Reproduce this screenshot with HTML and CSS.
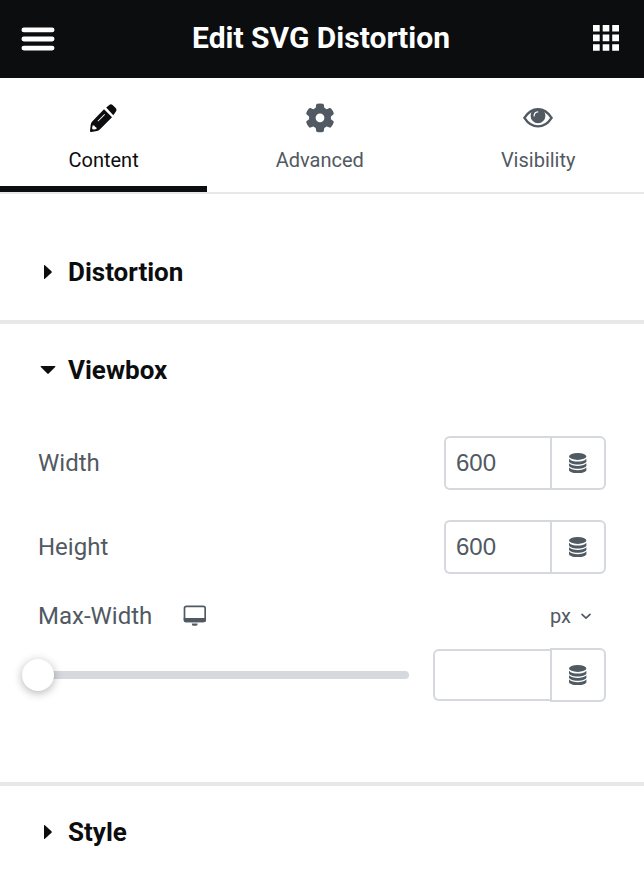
FILE: index.html
```html
<!DOCTYPE html>
<html lang="en">
<head>
<meta charset="utf-8">
<meta name="viewport" content="width=device-width, initial-scale=1">
<title>Edit SVG Distortion</title>
<link rel="stylesheet" href="styles.css">
</head>
<body>
<svg class="sprite" aria-hidden="true">
  <symbol id="database" viewBox="0 0 18 22">
    <ellipse cx="8.700" cy="4.400" rx="8.700" ry="3.500"/>
    <path d="M0 6.700C2 8.900 5.200 9.600 8.700 9.600s6.700-.7 8.700-2.900V9.200C17.400 11 13.500 12.400 8.700 12.400S0 11 0 9.200z"/>
    <path d="M0 11.300C2 13.300 5.200 13.900 8.700 13.900s6.700-.6 8.700-2.600V13.500C17.400 15.300 13.500 16.700 8.700 16.700S0 15.300 0 13.500z"/>
    <path d="M0 15.600C2 17.600 5.200 18.200 8.700 18.200s6.700-.6 8.700-2.600V17.900C17.400 19.700 13.500 21.100 8.700 21.100S0 19.700 0 17.900z"/>
  </symbol>
</svg>

<header class="topbar">
  <button class="topbar-button" type="button" aria-label="Menu">
    <svg width="34" height="26" viewBox="0 0 34 26" fill="#fff">
      <rect x="0.500" y="2.500" width="33" height="4.800" rx="2.400"/>
      <rect x="0.500" y="11.600" width="33" height="4.800" rx="2.400"/>
      <rect x="0.500" y="20.700" width="33" height="4.800" rx="2.400"/>
    </svg>
  </button>
  <h1 class="topbar-title">Edit SVG Distortion</h1>
  <button class="topbar-button" type="button" aria-label="Widgets">
    <svg width="28" height="26" viewBox="0 0 28 26" fill="#fff">
      <path d="M0 0h6.700v6.500H0zM9.700 0h6.600v6.500H9.700zM19.200 0h6.800v6.500h-6.800zM0 9.500h6.700v6.700H0zM9.700 9.500h6.600v6.700H9.700zM19.200 9.500h6.800v6.700h-6.800zM0 19.300h6.700v6.500H0zM9.700 19.300h6.600v6.500H9.700zM19.200 19.300h6.800v6.500h-6.800z"/>
    </svg>
  </button>
</header>

<nav class="tabs" role="tablist">
  <button class="tab tab-active" type="button" role="tab" aria-selected="true">
    <svg width="30" height="30" viewBox="0 0 30 30" fill="currentColor">
      <path fill-rule="evenodd" d="M15 6.300 23 14.200 10.800 26.400Q9.600 27.600 8 27.900L2.200 29Q.9 29.200 1 27.900L1.700 21.800Q1.900 19.800 3.200 18.400zM3.600 22.600 3.100 25.200Q3.300 26.800 5 26.600L7.600 26 7.400 24.400Q5.700 24.200 5.300 22.600zM8.500 17.900 9.200 18.500 16 11.700 15.400 11z"/>
      <path d="M17.200 4.600 20.300 1.900Q22 .5 23.600 2L26.900 5.300Q28.300 7 26.900 8.600L24.300 12.300z"/>
    </svg>
    <span>Content</span>
  </button>
  <button class="tab" type="button" role="tab" aria-selected="false">
    <svg width="30" height="30" viewBox="0 0 30 30" fill="currentColor">
      <path fill-rule="evenodd" d="M12.300.7Q15 .3 17.700.7Q18.600.9 18.800 1.700L19.300 4.800 21.700 6.200 24.600 5Q25.500 4.800 26.100 5.500Q27.900 7.600 28.700 10.100Q28.900 10.900 28.300 11.500L25.900 13.400V16.200L28.300 18.100Q28.900 18.700 28.700 19.500Q27.900 22 26.100 24.100Q25.500 24.800 24.600 24.600L21.700 23.400 19.300 24.900 18.800 28Q18.600 28.800 17.700 29Q15 29.400 12.300 29Q11.400 28.800 11.200 28L10.700 24.900 8.300 23.400 5.400 24.600Q4.500 24.800 3.900 24.100Q2.100 22 1.300 19.500Q1.100 18.700 1.700 18.100L4.100 16.200V13.400L1.700 11.500Q1.100 10.900 1.300 10.100Q2.100 7.600 3.900 5.500Q4.500 4.800 5.400 5L8.300 6.200 10.700 4.800 11.200 1.700Q11.400.9 12.300.7zM15 10.400a4.400 4.400 0 1 0 0 8.800 4.400 4.400 0 0 0 0-8.800z"/>
    </svg>
    <span>Advanced</span>
  </button>
  <button class="tab" type="button" role="tab" aria-selected="false">
    <svg width="30" height="30" viewBox="0 0 30 30">
      <path d="M1.400 14.800Q7 6.200 15 6.200T28.600 14.800Q23 23.400 15 23.400T1.400 14.800z" fill="none" stroke="currentColor" stroke-width="2.400"/>
      <circle cx="15" cy="12.800" r="7.400" fill="currentColor"/>
      <path d="M11.100 12.900Q11.200 9.200 14.800 8.900" fill="none" stroke="#fff" stroke-width="1.200" stroke-linecap="round"/>
    </svg>
    <span>Visibility</span>
  </button>
</nav>

<main>
  <section class="section section-first">
    <h2 class="section-title"><button class="section-toggle" type="button" aria-expanded="false">
      <svg width="20" height="16" viewBox="0 0 20 16"><path d="M6 1.500Q6 .6 6.900 1.300L13.500 7.300Q14.200 8 13.500 8.700L6.900 14.700Q6 15.400 6 14.500z"/></svg>
      Distortion
    </button></h2>
  </section>

  <section class="section">
    <h2 class="section-title"><button class="section-toggle" type="button" aria-expanded="true">
      <svg width="20" height="16" viewBox="0 0 20 16"><path d="M3.300 4H16.700Q18 4 17.200 5L10.700 11.600Q10 12.200 9.300 11.600L2.800 5Q2 4 3.300 4z"/></svg>
      Viewbox
    </button></h2>
    <div class="controls">
      <div class="control">
        <label for="width">Width</label>
        <div class="field">
          <input id="width" class="field-input" type="text" inputmode="numeric" value="600">
          <button class="field-button" type="button" aria-label="Dynamic width"><svg width="18" height="22"><use href="#database"/></svg></button>
        </div>
      </div>
      <div class="control">
        <label for="height">Height</label>
        <div class="field">
          <input id="height" class="field-input" type="text" inputmode="numeric" value="600">
          <button class="field-button" type="button" aria-label="Dynamic height"><svg width="18" height="22"><use href="#database"/></svg></button>
        </div>
      </div>
      <div class="control-group">
        <div class="control-head">
          <label for="max-width">Max-Width</label>
          <button class="device" type="button" aria-label="Desktop">
            <svg width="24" height="22" viewBox="0 0 24 22">
              <rect x="2.500" y="1.300" width="20.700" height="15.200" rx="2" fill="none" stroke="currentColor" stroke-width="1.700"/>
              <path d="M1.700 12.900H24V15.300q0 2-2 2H3.700q-2 0-2-2zM9.800 18.500h5.800q.3 2.200-1.600 2.200h-2.600Q9.500 20.700 9.800 18.500z" fill="currentColor"/>
            </svg>
          </button>
          <div class="unit">
            <select class="unit-select" aria-label="Unit"><option>px</option><option>%</option><option>vw</option></select>
            <svg width="12" height="8" viewBox="0 0 12 8"><path d="M2 2.300 6 6.200l4-3.900" fill="none" stroke="currentColor" stroke-width="1.700" stroke-linecap="round" stroke-linejoin="round"/></svg>
          </div>
        </div>
        <div class="slider-row">
          <input class="slider" type="range" min="0" max="100" value="0" aria-label="Max-Width slider">
          <div class="field field-wide">
            <input id="max-width" class="field-input field-input-short" type="text" inputmode="numeric">
            <button class="field-button" type="button" aria-label="Dynamic max-width"><svg width="18" height="22"><use href="#database"/></svg></button>
          </div>
        </div>
      </div>
    </div>
  </section>

  <section class="section">
    <h2 class="section-title"><button class="section-toggle" type="button" aria-expanded="false">
      <svg width="20" height="16" viewBox="0 0 20 16"><path d="M6 1.500Q6 .6 6.900 1.300L13.500 7.300Q14.200 8 13.500 8.700L6.900 14.700Q6 15.400 6 14.500z"/></svg>
      Style
    </button></h2>
  </section>
</main>
</body>
</html>
```
FILE: styles.css
```css
* {
  box-sizing: border-box;
}

body {
  margin: 0;
  background: #fff;
  color: #515962;
  font-family: Roboto, "Liberation Sans", sans-serif;
  font-size: 24px;
  line-height: 32px;
}

button,
select {
  margin: 0;
  padding: 0;
  border: 0;
  background: none;
  color: inherit;
  font: inherit;
  cursor: pointer;
}

svg {
  display: block;
  flex: none;
}

.sprite {
  position: absolute;
  width: 0;
  height: 0;
}

.topbar {
  display: grid;
  grid-template-columns: 1fr auto 1fr;
  align-items: center;
  height: 78px;
  padding: 0 23px 2px 21px;
  background: #0c0d0e;
  color: #fff;
}

.topbar-button {
  justify-self: start;
}

.topbar-button:last-child {
  justify-self: end;
}

.topbar-title {
  margin: 0;
  font-size: 30px;
  font-weight: 700;
}

.tabs {
  display: flex;
  height: 116px;
  border-bottom: 2px solid #e6e8ea;
}

.tab {
  display: flex;
  flex: 1 1 auto;
  flex-direction: column;
  align-items: center;
  gap: 15px;
  padding-top: 25px;
  border-bottom: 6px solid transparent;
  font-size: 20px;
  line-height: 24px;
}

.tab-active {
  border-bottom-color: #0c0d0e;
  color: #0c0d0e;
}

.section {
  border-top: 4px solid #e6e8ea;
}

.section-first {
  padding: 32px 0 2px;
  border-top: 0;
}

.section-title {
  margin: 0;
  font-size: 26px;
  font-weight: 700;
}

.section-toggle {
  display: flex;
  align-items: center;
  gap: 10px;
  width: 100%;
  height: 92px;
  padding: 0 38px;
  color: #0c0d0e;
  fill: currentColor;
}

.controls {
  display: flex;
  flex-direction: column;
  gap: 30px;
  padding: 20px 38px 80px;
}

.control {
  display: flex;
  align-items: center;
  justify-content: space-between;
}

.field {
  display: flex;
  align-items: center;
  width: 162px;
}

.field-wide {
  width: 173px;
}

.field-input {
  flex: 1;
  min-width: 0;
  height: 54px;
  padding: 0 10px;
  border: 2px solid #d5d8dc;
  border-right: 0;
  border-radius: 6px 0 0 6px;
  background: #fff;
  color: #515962;
  font: 24px "Liberation Sans", Arial, sans-serif;
}

.field-input-short {
  height: 52px;
}

.field-button {
  display: flex;
  align-items: center;
  justify-content: center;
  width: 56px;
  height: 54px;
  border: 2px solid #d5d8dc;
  border-radius: 0 6px 6px 0;
  fill: currentColor;
}

.control-group {
  display: flex;
  flex-direction: column;
  gap: 16px;
  margin-top: -4px;
}

.control-head {
  display: flex;
  align-items: center;
}

.device {
  margin-left: 30px;
}

.unit {
  display: flex;
  align-items: center;
  gap: 8px;
  margin-left: auto;
  padding-right: 14px;
  font-size: 20px;
}

.unit {
  gap: 5px;
}

.unit-select {
  appearance: none;
}

.slider-row {
  display: flex;
  align-items: center;
  gap: 24px;
  margin-left: -16px;
}

.slider {
  flex: 1;
  min-width: 0;
  height: 32px;
  margin: 0;
  appearance: none;
  background: none;
}

.slider::-webkit-slider-runnable-track {
  height: 8px;
  border-radius: 4px;
  background: #d5d8dc;
}

.slider::-webkit-slider-thumb {
  width: 32px;
  height: 32px;
  margin-top: -12px;
  appearance: none;
  border-radius: 50%;
  background: #fff;
  box-shadow: 0 2px 10px rgba(0, 0, 0, 0.3);
}
```
